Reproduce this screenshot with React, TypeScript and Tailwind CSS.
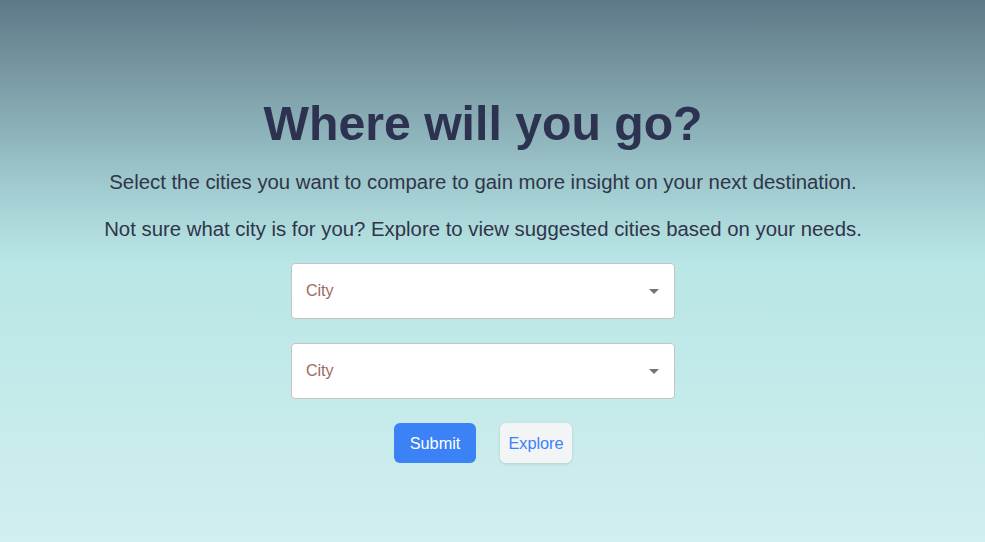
import React from "react";

function Select() {
  return (
    <div className="flex h-[56px] w-[384px] items-center justify-between rounded-[4px] border border-[#c4c4c4] bg-white pl-[14px] pr-[15px]">
      <span className="text-[16px] text-[#9a6b5e]">City</span>
      <svg width="10" height="5" viewBox="0 0 10 5" className="mt-[1px]">
        <path d="M0 0 L10 0 L5 5 Z" fill="#757575" />
      </svg>
    </div>
  );
}

export default function App() {
  return (
    <div
      className="min-h-[542px] w-full bg-[linear-gradient(180deg,#5e7887_0%,#a7d3d6_38%,#b9e6e6_49%,#d1efee_100%)]"
      style={{ fontFamily: '"Liberation Sans", Arial, sans-serif' }}
    >
      <div className="flex w-[966px] flex-col items-center pt-[99px] text-[#2d3250]">
        <h1 className="text-[48.2px] font-bold leading-[48px]">Where will you go?</h1>
        <p className="mt-[21px] text-[20.35px] leading-[28px] text-[#30354a]">
          Select the cities you want to compare to gain more insight on your next destination.
        </p>
        <p className="mt-[19px] text-[20.35px] leading-[28px] text-[#30354a]">
          Not sure what city is for you? Explore to view suggested cities based on your needs.
        </p>
        <div className="mt-[20px] flex flex-col gap-[24px]">
          <Select />
          <Select />
        </div>
        <div className="mt-[24px] flex gap-[24px]">
          <button className="h-[40px] w-[82px] rounded-[6px] bg-[#3b82f6] text-[16.3px] text-white">
            Submit
          </button>
          <button className="h-[40px] w-[72px] rounded-[6px] bg-[#f3f4f6] text-[16.3px] text-[#3b82f6] shadow-[0_1px_3px_rgba(0,0,0,0.12)]">
            Explore
          </button>
        </div>
      </div>
    </div>
  );
}
